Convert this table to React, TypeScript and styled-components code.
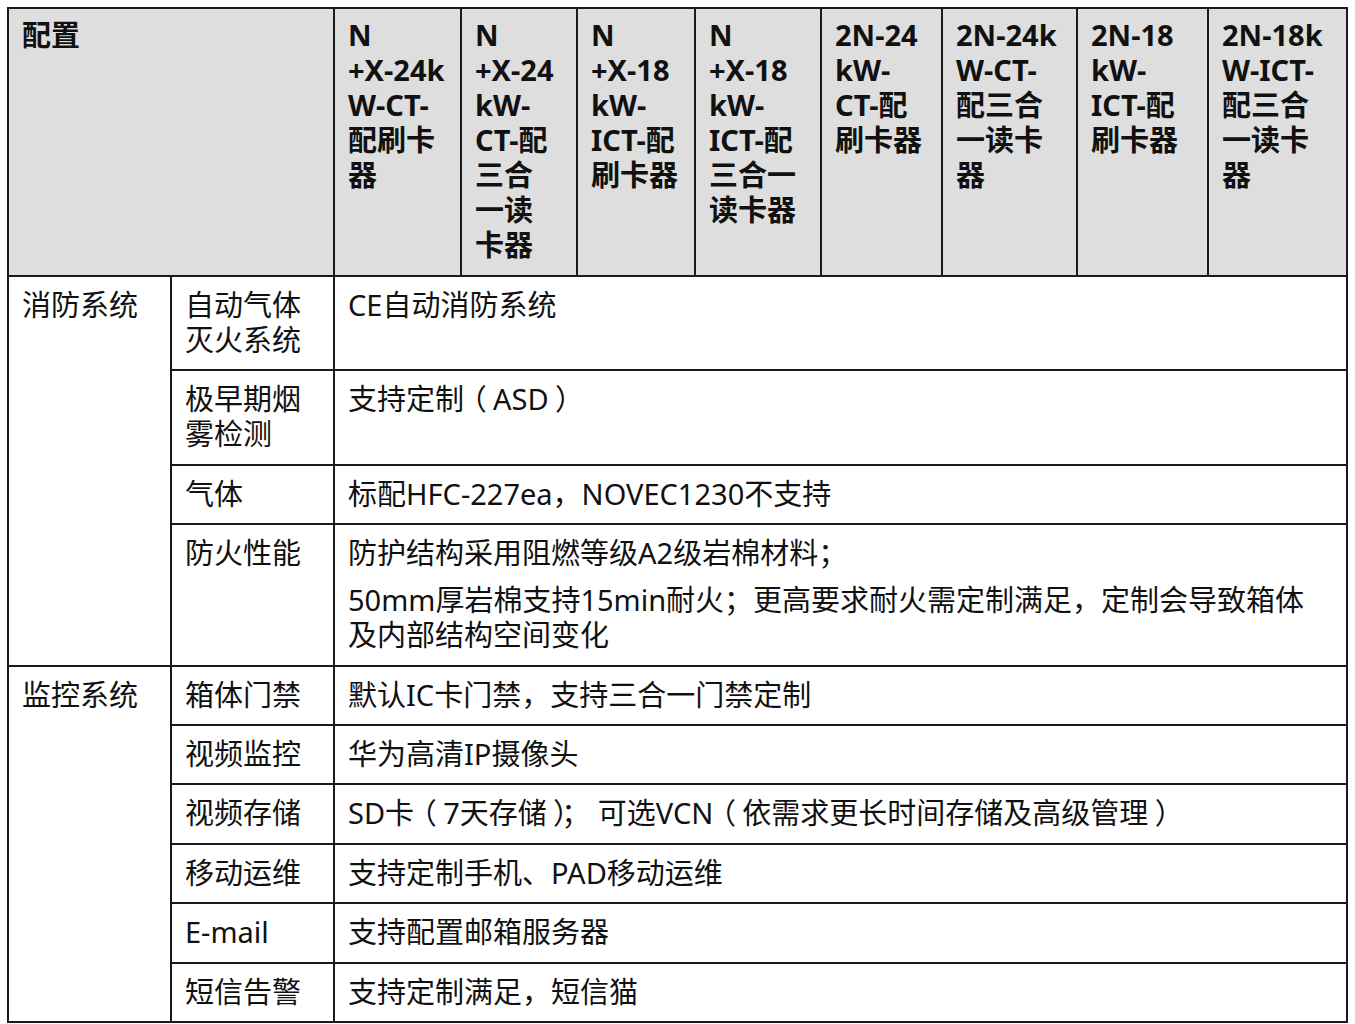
import styled, { createGlobalStyle } from "styled-components";

const GlobalStyle = createGlobalStyle`
  body {
    margin: 0;
    padding: 7px 0 0 7px;
    background: #fff;
    font-family: "Noto Sans", "Noto Sans CJK SC", sans-serif;
    color: #111;
  }
`;

const Table = styled.table`
  border-collapse: collapse;
  table-layout: fixed;
  width: 1339px;
  font-size: 29px;
  line-height: 35px;
`;

const HeadCell = styled.th`
  background: #dedede;
  border: 2px solid #1a1a1a;
  padding: 8px 13px 13px;
  text-align: left;
  vertical-align: top;
  font-weight: 700;
  white-space: nowrap;
`;

const Cell = styled.td`
  border: 2px solid #1a1a1a;
  padding: 10px 13px 12.4px;
  text-align: left;
  vertical-align: top;
  font-weight: 400;
`;

const Para = styled.p<{ $gap?: boolean }>`
  margin: ${(p) => (p.$gap ? "12px 0 0" : "0")};
`;

/* full-width brackets sit centred in their box in the reference font */
const Bracket = styled.span<{ $side: "open" | "close" }>`
  position: relative;
  left: ${(p) => (p.$side === "open" ? "-0.22em" : "0.22em")};
`;

const widths = [163, 163, 127, 116, 118, 126, 121, 135, 131, 139];

const heads: string[][] = [
  ["N", "+X-24k", "W-CT-", "配刷卡", "器"],
  ["N", "+X-24", "kW-", "CT-配", "三合", "一读", "卡器"],
  ["N", "+X-18", "kW-", "ICT-配", "刷卡器"],
  ["N", "+X-18", "kW-", "ICT-配", "三合一", "读卡器"],
  ["2N-24", "kW-", "CT-配", "刷卡器"],
  ["2N-24k", "W-CT-", "配三合", "一读卡", "器"],
  ["2N-18", "kW-", "ICT-配", "刷卡器"],
  ["2N-18k", "W-ICT-", "配三合", "一读卡", "器"],
];

type Row = { name: string[]; text: string[] };

const groups: { title: string; rows: Row[] }[] = [
  {
    title: "消防系统",
    rows: [
      { name: ["自动气体", "灭火系统"], text: ["CE自动消防系统"] },
      { name: ["极早期烟", "雾检测"], text: ["支持定制（ASD）"] },
      { name: ["气体"], text: ["标配HFC-227ea，NOVEC1230不支持"] },
      {
        name: ["防火性能"],
        text: [
          "防护结构采用阻燃等级A2级岩棉材料；",
          "50mm厚岩棉支持15min耐火；更高要求耐火需定制满足，定制会导致箱体及内部结构空间变化",
        ],
      },
    ],
  },
  {
    title: "监控系统",
    rows: [
      { name: ["箱体门禁"], text: ["默认IC卡门禁，支持三合一门禁定制"] },
      { name: ["视频监控"], text: ["华为高清IP摄像头"] },
      {
        name: ["视频存储"],
        text: ["SD卡（7天存储）； 可选VCN（依需求更长时间存储及高级管理）"],
      },
      { name: ["移动运维"], text: ["支持定制手机、PAD移动运维"] },
      { name: ["E-mail"], text: ["支持配置邮箱服务器"] },
      { name: ["短信告警"], text: ["支持定制满足，短信猫"] },
    ],
  },
];

const Lines = ({ lines }: { lines: string[] }) => (
  <>
    {lines.map((l, i) => (
      <span key={i}>
        {l}
        {i < lines.length - 1 && <br />}
      </span>
    ))}
  </>
);

// split text so full-width brackets can be nudged to the middle of their box
const Text = ({ value }: { value: string }) => (
  <>
    {value.split(/([（）])/).map((part, i) =>
      part === "（" ? (
        <Bracket key={i} $side="open">
          {part}
        </Bracket>
      ) : part === "）" ? (
        <Bracket key={i} $side="close">
          {part}
        </Bracket>
      ) : (
        <span key={i}>{part}</span>
      )
    )}
  </>
);

export default function App() {
  return (
    <>
      <GlobalStyle />
      <Table>
        <colgroup>
          {widths.map((w, i) => (
            <col key={i} style={{ width: w }} />
          ))}
        </colgroup>
        <thead>
          <tr>
            <HeadCell colSpan={2}>配置</HeadCell>
            {heads.map((h, i) => (
              <HeadCell key={i}>
                <Lines lines={h} />
              </HeadCell>
            ))}
          </tr>
        </thead>
        <tbody>
          {groups.map((g) =>
            g.rows.map((r, i) => (
              <tr key={g.title + i}>
                {i === 0 && <Cell rowSpan={g.rows.length}>{g.title}</Cell>}
                <Cell>
                  <Lines lines={r.name} />
                </Cell>
                <Cell colSpan={8}>
                  {r.text.map((t, j) => (
                    <Para key={j} $gap={j > 0}>
                      <Text value={t} />
                    </Para>
                  ))}
                </Cell>
              </tr>
            ))
          )}
        </tbody>
      </Table>
    </>
  );
}
